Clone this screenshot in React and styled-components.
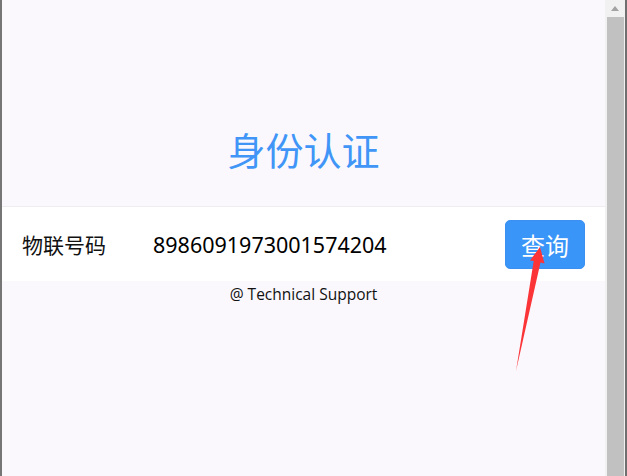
import React from 'react';
import styled, { createGlobalStyle } from 'styled-components';

const Global = createGlobalStyle`
  html, body {
    margin: 0;
    padding: 0;
    background: #faf8fd;
  }
  body {
    font-family: "Noto Sans", "Noto Sans CJK SC", sans-serif;
  }
`;

const Frame = styled.div`
  position: relative;
  display: flex;
  width: 627px;
  height: 476px;
  overflow: hidden;
`;

const Page = styled.div`
  flex: 1;
  display: flex;
  flex-direction: column;
  align-items: stretch;
  border-left: 2px solid #767676;
  background: #faf8fd;
  padding-top: 126px;
`;

const Title = styled.h1`
  margin: 0 0 34px;
  text-align: center;
  font-family: "Noto Sans CJK SC", sans-serif;
  font-weight: 400;
  font-size: 38px;
  line-height: 46px;
  color: #4095f7;
`;

const Row = styled.div`
  display: flex;
  align-items: center;
  height: 74px;
  border-top: 1px solid #efedf2;
  background: #ffffff;
  padding: 0 20px;
`;

const Label = styled.span`
  width: 131px;
  flex: none;
  font-family: "Noto Sans CJK SC", sans-serif;
  font-size: 21px;
  color: #111;
`;

const Value = styled.span`
  flex: 1;
  font-family: "Noto Sans", "Noto Sans CJK SC", sans-serif;
  font-size: 21.5px;
  color: #000;
`;

const Button = styled.button`
  width: 80px;
  height: 49px;
  border: 1px solid #3a8ff0;
  border-radius: 5px;
  background: #3995f8;
  color: #fff;
  font-family: "Noto Sans CJK SC", sans-serif;
  font-size: 24px;
  padding: 0;
  cursor: pointer;
`;

const Footer = styled.div`
  margin-top: 3px;
  text-align: center;
  font-family: "Open Sans", sans-serif;
  font-size: 15.5px;
  line-height: 20px;
  color: #111;
`;

const Scrollbar = styled.div`
  width: 20px;
  flex: none;
  display: flex;
  flex-direction: column;
  align-items: center;
  background: #f1f1f1;
  border-right: 2px solid #6f6f6f;
`;

const ArrowUp = styled.div`
  height: 17px;
  display: flex;
  align-items: center;
  justify-content: center;
  &::before {
    content: '';
    border-left: 4px solid transparent;
    border-right: 4px solid transparent;
    border-bottom: 5px solid #a3a3a3;
  }
`;

const Thumb = styled.div`
  flex: 1;
  width: 17px;
  margin-left: 1px;
  background: #c1c1c1;
`;

const Overlay = styled.svg`
  position: absolute;
  left: 0;
  top: 0;
  pointer-events: none;
`;

export default function App() {
  return (
    <Frame>
      <Global />
      <Page>
        <Title>身份认证</Title>
        <Row>
          <Label>物联号码</Label>
          <Value>8986091973001574204</Value>
          <Button>查询</Button>
        </Row>
        <Footer>@ Technical Support</Footer>
      </Page>
      <Scrollbar>
        <ArrowUp />
        <Thumb />
      </Scrollbar>
      <Overlay width="627" height="476" viewBox="0 0 627 476">
        <polygon
          points="516,371 540.5,262.4 544.5,263.5 540,247 530,260.5 533.7,261"
          fill="#fb3438"
        />
      </Overlay>
    </Frame>
  );
}
